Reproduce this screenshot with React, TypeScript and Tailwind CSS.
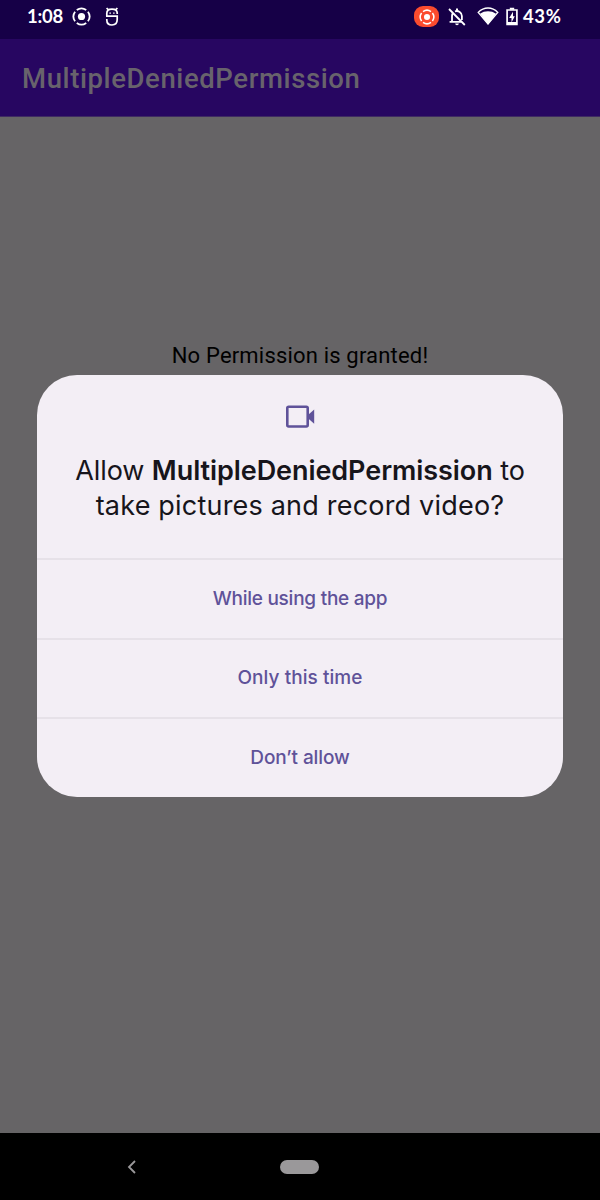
import React from "react";

function RecordGlyph({ className }: { className: string }) {
  return (
    <svg viewBox="0 0 20 20" className={className} fill="none">
      <circle cx="10" cy="10" r="3.8" fill="currentColor" />
      <circle
        cx="10"
        cy="10"
        r="8.4"
        stroke="currentColor"
        strokeWidth="1.9"
        pathLength="80"
        strokeDasharray="16 4"
        strokeDashoffset="-2"
        transform="rotate(45 10 10)"
      />
    </svg>
  );
}

function StatusBar() {
  return (
    <div className="flex h-[39px] shrink-0 items-start bg-[#160047] pl-[27px] pt-[7px] text-white">
      <span className="w-[45px] whitespace-nowrap font-['Lato'] text-[18.5px] font-bold leading-[19px] tracking-[-0.25px]">
        1:08
      </span>
      <RecordGlyph className="size-[19px]" />
      <svg viewBox="0 0 14 20" className="ml-[14px] h-[20px] w-[14px]" fill="none" stroke="currentColor" strokeWidth="1.7">
        <path d="M1.8 9.2V6.4C1.8 3.6 4 2.2 7 2.2s5.2 1.4 5.2 3.9v.8M1.6 1l1.6 1.6M12.4 1l-1.6 1.6M1 9.2h11.2v3.4c0 3.4-2.1 5.4-5.2 5.4s-5.2-2-5.2-5v-1" />
        <path d="M4.4 6.1h1.5M8.1 6.1h1.5" strokeWidth="1.4" />
      </svg>
      <div className="ml-[295px] mt-[-1px] flex h-[21px] w-[25px] items-center justify-center rounded-[9px] bg-[#fb4b2e]">
        <RecordGlyph className="size-[16px]" />
      </div>
      <svg viewBox="0 0 18 20" className="ml-[9px] h-[20px] w-[18px]" fill="none" stroke="currentColor" strokeWidth="1.8">
        <path d="M1 2l15.8 16M1.6 14.8h12.6M4 15V9c0-1.1.3-2.1.9-2.9M7 4.3c3.4-1 6.9 1 6.9 4.7v4" />
        <path d="M9 1.4v2.4" strokeWidth="2" />
        <path d="M7.2 16.5h3.6c0 2.2-3.6 2.2-3.6 0z" fill="currentColor" stroke="none" />
      </svg>
      <svg viewBox="0 0 22 20" className="ml-[11px] h-[20px] w-[22px]">
        <path d="M1.2 5.4C7-.4 15-.4 20.8 5.4L11 17z" fill="none" stroke="currentColor" strokeWidth="1.4" />
        <path d="M3 6.8c4.7-3.3 11.3-3.3 16 0L11 17.4z" fill="currentColor" />
      </svg>
      <svg viewBox="0 0 12 19" className="ml-[7px] h-[19px] w-[12px]">
        <path d="M1.1 3h9.8v14.3H1.1z" fill="none" stroke="currentColor" strokeWidth="1.7" />
        <path d="M3.8.8h4.4v2H3.8zM1 15h10v2.5H1z" fill="currentColor" />
        <path d="M7 4.8L3.2 11h2.3v4.6L8.8 9.2H7z" fill="currentColor" />
      </svg>
      <span className="ml-[5px] whitespace-nowrap font-['Lato'] text-[18.5px] font-bold leading-[19px] tracking-[0.6px]">
        43%
      </span>
    </div>
  );
}

function CameraIcon() {
  return (
    <svg viewBox="0 0 30 24" className="h-[24px] w-[30px]">
      <rect x="2.3" y="1.7" width="20.4" height="19.8" rx="1.4" fill="none" stroke="#5f5299" strokeWidth="2.6" />
      <path d="M23 10l6.2-5.6v14.4L23 13.2z" fill="#5f5299" />
    </svg>
  );
}

function PermissionDialog() {
  const options = [
    { label: "While using the app", tracking: "tracking-[-0.25px]" },
    { label: "Only this time", tracking: "tracking-[0.06px]" },
    { label: "Don’t allow", tracking: "tracking-[-0.1px]" },
  ];
  return (
    <div
      role="dialog"
      className="absolute left-[37px] top-[375px] flex h-[422px] w-[526px] flex-col overflow-hidden rounded-[40px] bg-[#f3eef5] font-['Inter']"
    >
      <div className="flex h-[183px] shrink-0 flex-col items-center pt-[30px]">
        <CameraIcon />
        <h2 className="mt-[24px] whitespace-nowrap text-center text-[27px] font-normal leading-[35px] text-[#17151b]">
          <span className="block tracking-[-0.07px]">
            Allow <b className="font-semibold">MultipleDeniedPermission</b> to
          </span>
          <span className="block tracking-[0.2px]">take pictures and record video?</span>
        </h2>
      </div>
      {options.map(({ label, tracking }) => (
        <button
          key={label}
          className={`flex w-full flex-1 items-center justify-center border-t-2 border-[#e6e1e8] text-[19px] font-medium text-[#5f5299] ${tracking}`}
        >
          {label}
        </button>
      ))}
    </div>
  );
}

export default function App() {
  return (
    <div className="relative flex h-[1200px] w-[600px] flex-col overflow-hidden bg-[#666466]">
      <StatusBar />
      <header className="flex h-[78px] shrink-0 items-center border-b border-[#3f2a62] bg-[#270661] pl-[22px] pt-[3px]">
        <h1 className="whitespace-nowrap font-['Roboto'] text-[27.5px] font-medium tracking-[0.6px] text-[#68636c]">
          MultipleDeniedPermission
        </h1>
      </header>
      <main className="flex flex-1 justify-center pt-[226px]">
        <p className="whitespace-nowrap font-['Roboto'] text-[22px] leading-[26px] tracking-[0.18px] text-black">
          No Permission is granted!
        </p>
      </main>
      <nav className="flex h-[67px] shrink-0 items-center bg-black pl-[126px]">
        <svg viewBox="0 0 11 16" className="h-[16px] w-[11px]">
          <path d="M9 2L3 8l6 6" fill="none" stroke="#9a989a" strokeWidth="1.8" />
        </svg>
        <div className="ml-[143px] h-[14px] w-[39px] rounded-full bg-[#9a989a]" />
      </nav>
      <PermissionDialog />
    </div>
  );
}
